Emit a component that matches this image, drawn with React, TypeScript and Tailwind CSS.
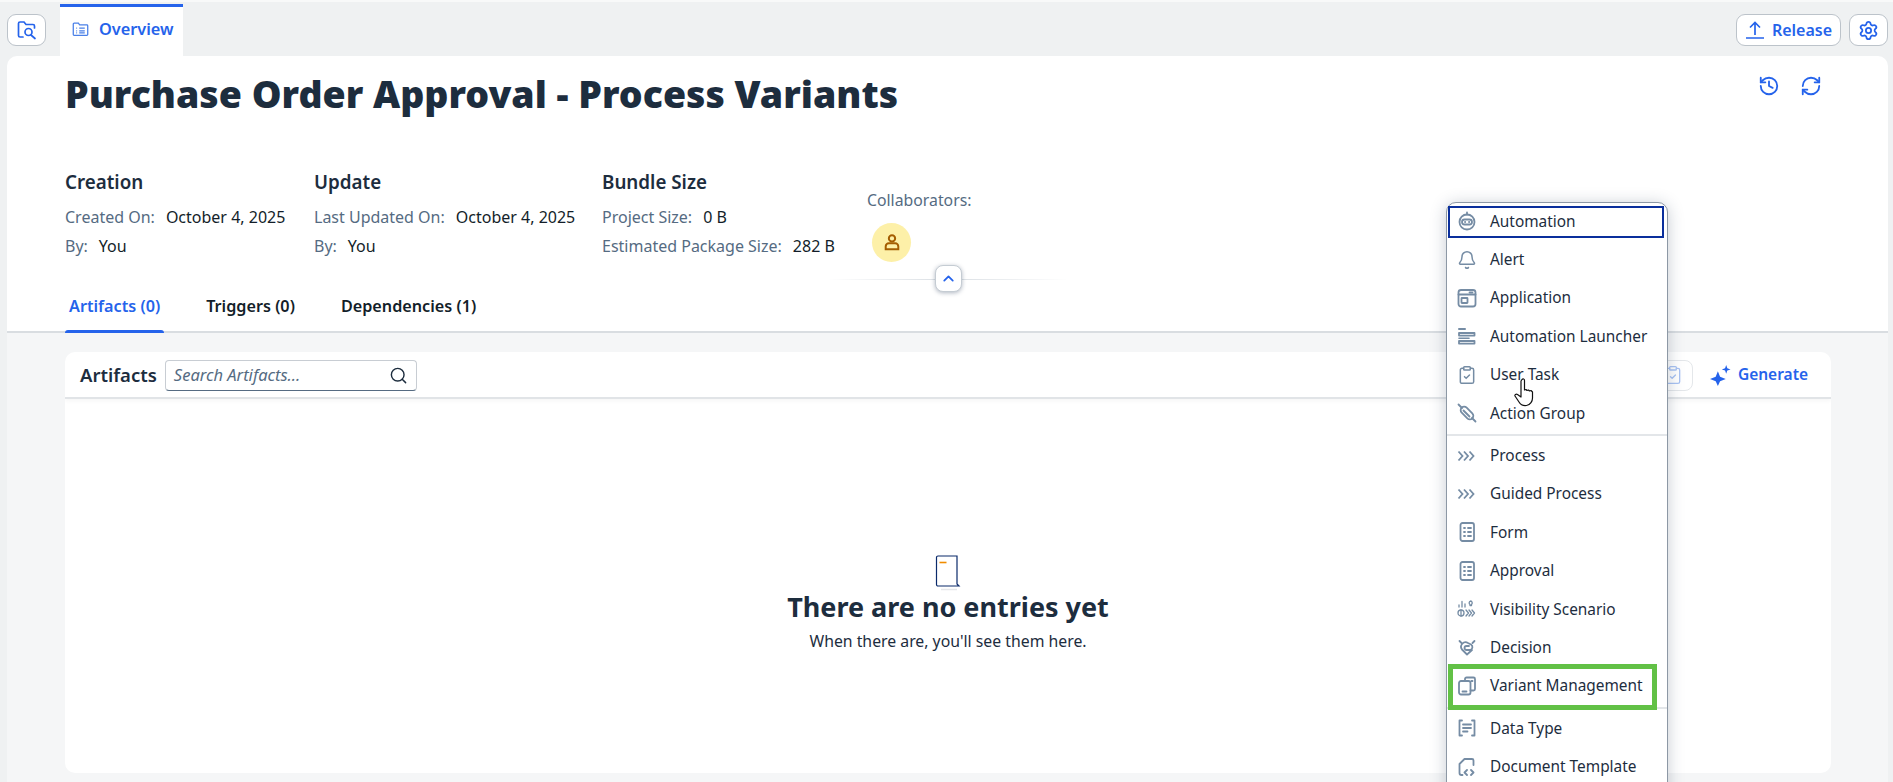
import { Bell, ChevronUp, ClipboardCheck, History, RefreshCw, Search, Settings } from "lucide-react";
import type { ReactNode } from "react";

const S = ({ children, className = "w-[20px] h-[20px]" }: { children: ReactNode; className?: string }) => (
  <svg viewBox="0 0 20 20" fill="none" stroke="currentColor" strokeWidth="1.8" strokeLinecap="round" strokeLinejoin="round" className={className}>
    {children}
  </svg>
);

const Chevrons = () => (
  <svg viewBox="0 0 20 20" fill="none" stroke="currentColor" strokeWidth="1.8" className="w-[20px] h-[20px]">
    <path d="M1.500 5.500l4 4.500-4 4.500M7 5.500l4 4.500-4 4.500M12.500 5.500l4 4.500-4 4.500" />
  </svg>
);

const FormIcon = () => (
  <S>
    <rect x="3.500" y="1" width="13.500" height="18" rx="2" />
    <path d="M7 6h1M11 6h3M7 10h1M11 10h3M7 14h1M11 14h3" />
  </S>
);

const menuTop = [
  { label: "Automation", icon: <S><circle cx="10" cy="11" r="7.500" /><rect x="5" y="8.500" width="10" height="5" rx="2.500" /><path d="M10 3.500V1.500M8 11h.2M12 11h.2" /></S> },
  { label: "Alert", icon: <Bell size={20} strokeWidth={1.8} /> },
  { label: "Application", icon: <S><rect x="1.500" y="2" width="17" height="16.500" rx="2.500" /><path d="M1.500 6.500h17M12.500 4.300h3" /><rect x="4.500" y="10" width="6" height="5" rx="0.500" /></S> },
  { label: "Automation Launcher", icon: <S><path d="M2 3h6" strokeWidth="2" /><rect x="2" y="7" width="15.500" height="2.600" /><path d="M2 12.300h10" strokeWidth="1.600" /><rect x="2" y="15" width="15.500" height="2.600" /></S> },
  { label: "User Task", icon: <ClipboardCheck size={20} strokeWidth={1.8} /> },
  { label: "Action Group", icon: <S><path d="M1.500 1.500l3.500 3.500M15 15l3.500 3.500M6.500 7.500l6 6" /><rect x="2.500" y="6.500" width="15" height="7" rx="3.500" transform="rotate(45 10 10)" /></S> },
];

const menuMiddle = [
  { label: "Process", icon: <Chevrons /> },
  { label: "Guided Process", icon: <Chevrons /> },
  { label: "Form", icon: <FormIcon /> },
  { label: "Approval", icon: <FormIcon /> },
  { label: "Visibility Scenario", icon: <S><path d="M2 8V6M5 8V2.500M8 8V5M13.500 2a2 2 0 0 1 1 3.500v1h-1.500V5.500A2 2 0 0 1 13.500 2z" strokeWidth="1.300" /><circle cx="4" cy="14" r="3" strokeWidth="1.300" /><path d="M4 11v6M9 11l2.500 3L9 17M12 11l2.500 3-2.500 3M15 11l2.500 3-2.500 3" strokeWidth="1.300" /></S> },
  { label: "Decision", icon: <S><path d="M2.500 4l2 2M17.500 4l-2 2M10 17.500l-5-5a4.500 4.500 0 0 1 6-6.500l3 1.500a3 3 0 0 1-1 5.500H9.500a2 2 0 0 1 0-4h2.500M10 17.500l5-4.500" /></S> },
  { label: "Variant Management", icon: <S><path d="M8 5V3a1.500 1.500 0 0 1 1.500-1.500h7A1.500 1.500 0 0 1 18 3v10a1.500 1.500 0 0 1-1.500 1.500H13.500" /><rect x="2" y="5" width="11.500" height="13.500" rx="2" /><path d="M5.500 15.500h4M14.500 5h1" /></S> },
];

const menuBottom = [
  { label: "Data Type", icon: <S><path d="M5 2.500H2.500v15H5M15 2.500h2.500v15H15M6 6.500h8M6 10h8M6 13.500h4.500" /></S> },
  { label: "Document Template", icon: <S><path d="M2.500 16V7l5-5h7.500a1.500 1.500 0 0 1 1.500 1.500V8M2.500 16a2 2 0 0 0 2 2h1M10 13l-2.500 2.500L10 18M14 13l2.500 2.500L14 18" /></S> },
];

const MenuRow = ({ label, icon }: { label: string; icon: ReactNode }) => (
  <div className="h-[38.4px] flex items-center gap-[13px] pl-[10px] pb-[2px] text-[15.400px] text-[#1d2d3e] shrink-0">
    <span className="text-[#758ca4] w-[20px] flex justify-center">{icon}</span>
    <span>{label}</span>
  </div>
);

const Meta = ({ label, value }: { label: string; value: string }) => (
  <div className="flex gap-[11px] text-[16px] h-[29px] items-center whitespace-nowrap">
    <span className="text-[#556b82]">{label}</span>
    <span className="text-[#131e29]">{value}</span>
  </div>
);

const MetaGroup = ({ title, rows, className }: { title: string; rows: [string, string][]; className: string }) => (
  <div className={className}>
    <div className="text-[18.800px] font-semibold text-[#1d2d3e] h-[26px] leading-[26px] mb-[7px]">{title}</div>
    {rows.map(([l, v]) => <Meta key={l} label={l} value={v} />)}
  </div>
);

export default function App() {
  return (
    <div className="relative h-[782px] overflow-hidden bg-[#eff1f2] border-t-2 border-[#f8f9f9] font-['Noto_Sans','Open_Sans',sans-serif]">
      <div className="h-[54px] flex items-start pl-[7px] pr-[5px]">
        <button className="mt-[12px] w-[39px] h-[32px] rounded-[9px] bg-white border border-[#bcc3ca] flex items-center justify-center text-[#2563eb]">
          <svg viewBox="0 0 20 20" fill="none" stroke="currentColor" strokeWidth="1.700" className="w-[20px] h-[20px]" strokeLinecap="round">
            <path d="M6 17H3a1.500 1.500 0 0 1-1.500-1.500v-12A1.500 1.500 0 0 1 3 2h4l2 2.500h7a1.500 1.500 0 0 1 1.500 1.500v2" />
            <circle cx="11.500" cy="12" r="3.500" />
            <path d="M14 15l4 3.500" />
          </svg>
        </button>
        <div className="ml-[14px] mt-[2px] w-[123px] h-[52px] bg-white border-t-[3px] border-[#2563eb] flex items-center pl-[12px] pb-[4px] gap-[10px] text-[#2563eb] text-[16.300px] font-semibold">
          <svg viewBox="0 0 20 20" fill="none" stroke="currentColor" strokeWidth="1.500" className="w-[17px] h-[17px] text-[#4a80e8]">
            <path d="M1.500 16V3.500A1 1 0 0 1 2.500 2.500h5l1.500 2h8.500a1 1 0 0 1 1 1V16a1 1 0 0 1-1 1h-15a1 1 0 0 1-1-1z" />
            <path d="M5 8.500h1M8.500 8.500H15M5 11.500h1M8.500 11.500H15M5 14h1M8.500 14H15" />
          </svg>
          <span>Overview</span>
        </div>
        <div className="ml-auto mt-[12px] flex gap-[8px]">
          <button className="w-[105px] h-[32px] rounded-[9px] bg-white border border-[#bcc3ca] flex items-center justify-center gap-[7px] text-[#2563eb] text-[16px] font-semibold">
            <svg viewBox="0 0 20 20" fill="none" stroke="currentColor" strokeWidth="1.700" className="w-[20px] h-[20px]">
              <path d="M10 15V2.500M5 7.500l5-5 5 5M1 18h18" />
            </svg>
            Release
          </button>
          <button className="w-[39px] h-[32px] rounded-[9px] bg-white border border-[#bcc3ca] flex items-center justify-center text-[#2563eb]">
            <Settings size={21} strokeWidth={2} />
          </button>
        </div>
      </div>

      <div className="ml-[7px] mr-[5px] h-[726px] rounded-t-[10px] bg-white flex flex-col">
        <div className="relative pl-[58px] pr-[66px] h-[220px] shrink-0 flex flex-col">
          <div className="flex items-start justify-between pt-[13px]">
            <h1 className="text-[37.500px] leading-[50px] font-black text-[#1d2d3e]">Purchase Order Approval - Process Variants</h1>
            <div className="flex gap-[20px] text-[#2563eb] pt-[6px]">
              <History size={22} strokeWidth={2} />
              <RefreshCw size={22} strokeWidth={2} />
            </div>
          </div>
          <div className="flex mt-[50px]">
            <MetaGroup className="w-[249px]" title="Creation" rows={[["Created On:", "October 4, 2025"], ["By:", "You"]]} />
            <MetaGroup className="w-[288px]" title="Update" rows={[["Last Updated On:", "October 4, 2025"], ["By:", "You"]]} />
            <MetaGroup className="w-[265px]" title="Bundle Size" rows={[["Project Size:", "0 B"], ["Estimated Package Size:", "282 B"]]} />
            <div className="pt-[20px]">
              <div className="text-[15.800px] text-[#556b82]">Collaborators:</div>
              <div className="ml-[5px] mt-[10px] w-[39px] h-[39px] rounded-full bg-[#fdf0a8] flex items-center justify-center text-[#a45d00]">
                <svg viewBox="0 0 20 20" fill="none" stroke="currentColor" strokeWidth="2.200" className="w-[18px] h-[18px]">
                  <circle cx="10" cy="6" r="3.500" />
                  <path d="M3 18v-3a3.500 3.500 0 0 1 3.500-3.500h7A3.500 3.500 0 0 1 17 15v3z" />
                </svg>
              </div>
            </div>
          </div>
          <div className="absolute left-[821px] top-[209px] w-[240px] h-[27px] flex items-center justify-center z-10">
            <div className="absolute inset-x-0 top-1/2 h-px bg-gradient-to-r from-transparent via-[#d9dee3] to-transparent" />
            <button className="relative w-[27px] h-[27px] rounded-[8px] bg-white border border-[#c5ccd3] shadow-[0_1px_4px_rgba(30,50,80,0.35)] flex items-center justify-center text-[#2563eb]">
              <ChevronUp size={17} strokeWidth={2.500} />
            </button>
          </div>
        </div>

        <div className="h-[57px] shrink-0 border-b-2 border-[#d9dde1] pl-[58px] flex gap-[38px] text-[16.200px] font-semibold">
          <div className="relative px-[4px] pt-[18px] text-[#2563eb]">
            Artifacts (0)
            <div className="absolute left-[0px] right-[0px] -bottom-[2px] h-[3px] bg-[#2563eb] rounded-t-sm" />
          </div>
          <div className="px-[4px] pt-[18px] text-[#131e29]">Triggers (0)</div>
          <div className="px-[4px] pt-[18px] text-[#131e29]">Dependencies (1)</div>
        </div>

        <div className="flex-1 min-h-0 bg-[#f5f6f7] pl-[58px] pr-[57px] pt-[19px] pb-[9px] flex">
          <div className="flex-1 rounded-[10px] bg-white flex flex-col overflow-hidden">
            <div className="h-[47px] shrink-0 border-b-2 border-[#e1e4e7] shadow-[0_2px_4px_rgba(0,0,0,0.04)] flex items-center pl-[15px] pr-[23px] pt-[1px]">
              <span className="text-[18.500px] font-semibold text-[#1d2d3e]">Artifacts</span>
              <div className="ml-[8px] w-[252px] h-[31px] rounded-[4px] border border-[#c8cdd3] border-b-[#556b82] flex items-center justify-between pl-[8px] pr-[8px]">
                <span className="italic text-[16.500px] text-[#556b82]">Search Artifacts...</span>
                <Search size={19} className="text-[#1d2d3e]" strokeWidth={1.800} />
              </div>
              <div className="ml-auto flex items-center gap-[17px]">
                <div className="w-[40px] h-[31px] rounded-r-[8px] border border-[#e4e7ea] flex items-center justify-center text-[#a9c3f3]">
                  <ClipboardCheck size={20} strokeWidth={1.600} />
                </div>
                <div className="flex items-center gap-[7px] text-[#2563eb] text-[15.500px] font-semibold">
                  <svg viewBox="0 0 24 24" fill="currentColor" className="w-[21px] h-[21px]">
                    <path d="M9 7l2.500 6.500L18 16l-6.500 2.500L9 24l-2.500-5.500L0 16l6.500-2.500zM18.500 0l1.300 3.700L23.500 5l-3.700 1.300L18.500 10l-1.300-3.700L13.500 5l3.700-1.300z" />
                  </svg>
                  Generate
                </div>
              </div>
            </div>
            <div className="flex-1 flex flex-col items-center pt-[156px]">
              <svg viewBox="0 0 26 36" fill="none" className="w-[26px] h-[36px]">
                <path d="M3 1h19v28l2 2H3a1.500 1.500 0 0 1-1.500-1.500V2.500A1.500 1.500 0 0 1 3 1z" stroke="#0a2a6b" strokeWidth="1.200" />
                <path d="M4.500 7.500h7" stroke="#f08c00" strokeWidth="1.600" />
                <path d="M6 34.500h16" stroke="#e5e7ea" strokeWidth="1.500" />
              </svg>
              <div className="text-[27px] leading-[36px] font-bold text-[#1d2d3e] -mt-[2px]">There are no entries yet</div>
              <div className="text-[15.800px] leading-[22px] text-[#1d2d3e] mt-[5px]">When there are, you&apos;ll see them here.</div>
            </div>
          </div>
        </div>
      </div>

      {/* open create menu, floats over the page */}
      <div className="absolute left-[1446px] top-[200px] w-[222px] h-[620px] rounded-t-[10px] bg-white border border-[#8d98a5] shadow-[0_2px_16px_rgba(30,50,80,0.25)] flex flex-col">
        {menuTop.map(m => <MenuRow key={m.label} {...m} />)}
        <div className="h-[2px] my-[1px] bg-[#e3e6e9]" />
        {menuMiddle.map(m => <MenuRow key={m.label} {...m} />)}
        <div className="h-[2px] my-[1px] bg-[#e3e6e9]" />
        {menuBottom.map(m => <MenuRow key={m.label} {...m} />)}
      </div>
      <div className="absolute left-[1448px] top-[204px] w-[216px] h-[32px] border-[2px] border-[#0a2f9c]" />
      <div className="absolute left-[1448px] top-[662px] w-[209px] h-[46px] border-[5px] border-[#62c146]" />

      {/* mouse pointer */}
      <svg viewBox="0 0 24 32" className="absolute left-[1513px] top-[375px] w-[24px] h-[32px]" fill="#fff" stroke="#111" strokeWidth="1.200" strokeLinejoin="round">
        <path d="M9 2.500c1-1 2.500-.5 2.500 1V13l1.500-.5 1 1 1.500-.5 1 1 1.500-.5 1.500 1.500v6c0 3-2 7-6 7.500-3.500.5-6-1-7.500-3.500L2 19c-.5-1 1-2.500 2.500-1.500L8 20V4z" />
      </svg>
    </div>
  );
}
